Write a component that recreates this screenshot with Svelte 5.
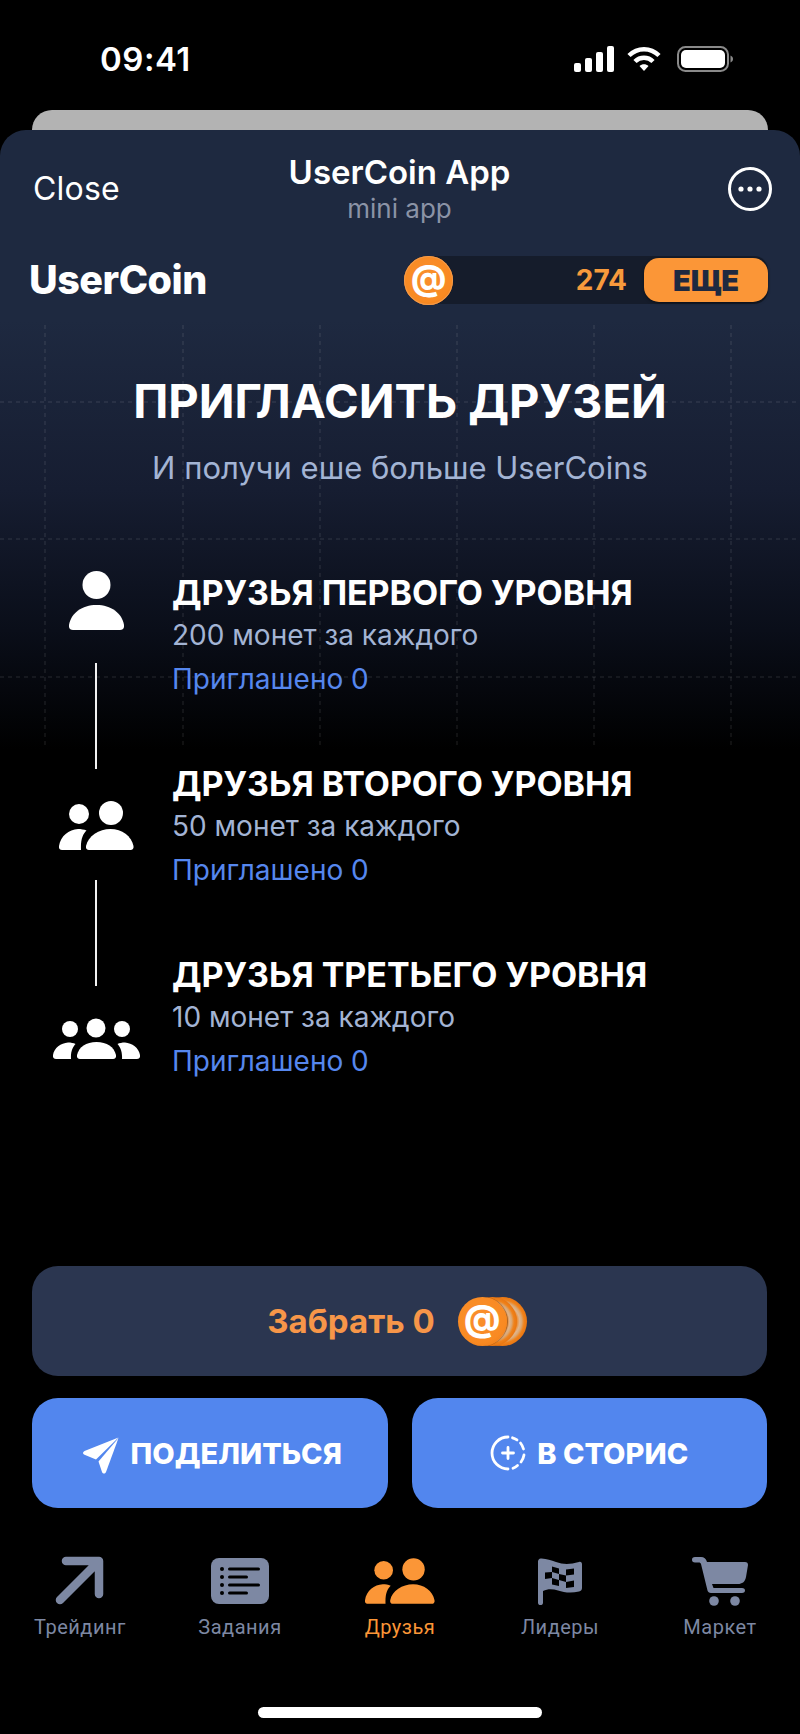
<script lang="ts">
  const levels = [
    { title: "ДРУЗЬЯ ПЕРВОГО УРОВНЯ", reward: "200 монет за каждого", invited: 0 },
    { title: "ДРУЗЬЯ ВТОРОГО УРОВНЯ", reward: "50 монет за каждого", invited: 0 },
    { title: "ДРУЗЬЯ ТРЕТЬЕГО УРОВНЯ", reward: "10 монет за каждого", invited: 0 },
  ];

  const tabs = [
    { key: "trade", label: "Трейдинг" },
    { key: "tasks", label: "Задания" },
    { key: "friends", label: "Друзья" },
    { key: "leaders", label: "Лидеры" },
    { key: "market", label: "Маркет" },
  ];
  const activeTab = "friends";

  // grid behind the hero, one line every 137px
  const gridX = [45, 183, 320, 457, 594, 731];
  const gridY = [402, 539, 677];
</script>

{#snippet coin(size: string)}
  <span class="coin {size}"><span class="at">@</span></span>
{/snippet}

{#snippet twoPeople()}
  <circle cx="20" cy="13" r="10" />
  <circle cx="52" cy="12" r="12" />
  <path d="M0 45C1.500 35 10 28.500 19 28C22 28 25 28.500 27.500 29.500C24 33 21.500 38 22 49H3C1 49-.5 47.500 0 45Z" />
  <path d="M27 45C29 35 40 28 51.500 28C63 28 72.500 35 74.500 45C75 47.500 73.500 49 71.500 49H30C28 49 26.500 47.500 27 45Z" />
{/snippet}

<div class="phone">
  <div class="status">
    <span class="time">09:41</span>
    <div class="status-icons">
      <svg width="40" height="26" viewBox="0 0 40 26" fill="#fff">
        <rect x="0" y="17" width="7" height="9" rx="2" />
        <rect x="11" y="12" width="7" height="14" rx="2" />
        <rect x="22" y="6" width="7" height="20" rx="2" />
        <rect x="33" y="0" width="7" height="26" rx="2" />
      </svg>
      <svg class="wifi" width="34" height="26" viewBox="0 0 34 26" fill="none" stroke="#fff" stroke-width="4.500">
        <path d="M2 9.500C10.500 1 23.500 1 32 9.500" />
        <path d="M8 15.500C13 10.500 21 10.500 26 15.500" />
        <path d="M12.500 20L17 25L21.500 20C19 17.500 15 17.500 12.500 20Z" fill="#fff" stroke="none" />
      </svg>
      <svg width="56" height="26" viewBox="0 0 56 26">
        <rect x="1" y="1" width="50" height="24" rx="7.500" fill="none" stroke="#8a8a8a" stroke-width="2" />
        <rect x="4" y="4" width="44" height="18" rx="5" fill="#fff" />
        <path d="M53.500 9.500c1.800.7 2.500 2 2.500 3.500s-.7 2.800-2.500 3.500z" fill="#8a8a8a" />
      </svg>
    </div>
  </div>

  <div class="peek"></div>

  <section class="sheet">
    <svg class="grid" width="800" height="640" viewBox="0 130 800 640">
      <g stroke="#fff" stroke-opacity="0.09" stroke-width="1.500" stroke-dasharray="4 4">
        {#each gridX as x}
          <line x1={x} y1="325" x2={x} y2="745" />
        {/each}
        {#each gridY as y}
          <line x1="0" y1={y} x2="800" y2={y} />
        {/each}
      </g>
    </svg>

    <header class="nav">
      <span class="close">Close</span>
      <div class="nav-title">
        <strong>UserCoin App</strong>
        <span>mini app</span>
      </div>
      <svg class="more" width="44" height="44" viewBox="0 0 44 44" fill="#fff">
        <circle cx="22" cy="22" r="20.500" fill="none" stroke="#fff" stroke-width="3" />
        <circle cx="13" cy="22" r="2.600" />
        <circle cx="22" cy="22" r="2.600" />
        <circle cx="31" cy="22" r="2.600" />
      </svg>
    </header>

    <div class="brand-row">
      <span class="logo">UserCoin</span>
      <div class="balance">
        {@render coin("coin-lg")}
        <span class="amount">274</span>
        <span class="more-btn">ЕЩЕ</span>
      </div>
    </div>

    <div class="hero">
      <h1>ПРИГЛАСИТЬ ДРУЗЕЙ</h1>
      <p>И получи еше больше UserCoins</p>
    </div>

    <div class="levels">
      <div class="rail">
        <svg class="person" width="55" height="60" viewBox="0 0 55 60" fill="#fff">
          <circle cx="27.500" cy="14" r="14" />
          <path d="M0 54C2 42 13 34 27.500 34C42 34 53 42 55 54C55.500 57 54 59 51 59H4C1 59-.5 57 0 54Z" />
        </svg>
        <span class="line"></span>
        <svg class="people" width="75" height="49" viewBox="0 0 75 49" fill="#fff">
          {@render twoPeople()}
        </svg>
        <span class="line"></span>
        <svg class="crowd" width="87" height="41" viewBox="0 0 87 41" fill="#fff">
          <circle cx="43" cy="10" r="9.500" />
          <circle cx="17" cy="11" r="8" />
          <circle cx="69" cy="11" r="8" />
          <path d="M24 37C26 29 33 24 43.500 24C54 24 61 29 63 37C63.500 39.500 62 41 60 41H27C25 41 23.500 39.500 24 37Z" />
          <path d="M0 37C1 30 8 25 15 24.500C18 24.500 20.500 25 22.500 26C20 29 17.500 33 18 41H3C1 41-.5 39.500 0 37Z" />
          <path d="M87 37C86 30 79 25 72 24.500C69 24.500 66.500 25 64.500 26C67 29 69.500 33 69 41H84C86 41 87.500 39.500 87 37Z" />
        </svg>
      </div>
      <div class="level-list">
        {#each levels as level}
          <div class="level">
            <h2>{level.title}</h2>
            <p class="reward">{level.reward}</p>
            <p class="invited">Приглашено {level.invited}</p>
          </div>
        {/each}
      </div>
    </div>

    <div class="actions">
      <button class="claim">
        <span>Забрать 0</span>
        <span class="stack">
          <span class="stack-back"></span>
          <span class="stack-mid"></span>
          {@render coin("coin-md")}
        </span>
      </button>
      <div class="action-row">
        <button class="primary">
          <svg class="plane" width="38" height="38" viewBox="0 0 38 38" fill="#fff">
            <path d="M36.500 1.500L2.500 15C.5 16 .5 18 2.500 18.800L14 23.500Z" />
            <path d="M36.500 2L16.500 25.500L20 36C21 38 23 38 24 36Z" />
          </svg>
          ПОДЕЛИТЬСЯ
        </button>
        <button class="primary">
          <svg width="36" height="36" viewBox="0 0 36 36" fill="none" stroke="#fff" stroke-width="2.800" stroke-linecap="round">
            <path d="M18 2A16 16 0 0 0 18 34" />
            <path d="M22.500 2.800A16 16 0 0 1 27 4.900" />
            <path d="M30.500 8A16 16 0 0 1 33.500 14" />
            <path d="M34 20A16 16 0 0 1 31 27" />
            <path d="M27.500 30.500A16 16 0 0 1 23 33.200" />
            <path d="M18 12.500V23.500M12.500 18H23.500" />
          </svg>
          В СТОРИС
        </button>
      </div>
    </div>

    <nav class="tabs">
      {#each tabs as tab}
        <div class="tab" class:active={tab.key === activeTab}>
          <div class="tab-icon">
            {#if tab.key === "trade"}
              <svg width="50" height="50" viewBox="0 0 50 50" fill="none" stroke="currentColor" stroke-width="8.500" stroke-linecap="round" stroke-linejoin="round">
                <path d="M5 44L44 5M11 5H44V38" />
              </svg>
            {:else if tab.key === "tasks"}
              <svg width="58" height="46" viewBox="0 0 58 46">
                <rect width="58" height="46" rx="8" fill="currentColor" />
                <g fill="#000">
                  <circle cx="11" cy="11" r="2" />
                  <circle cx="11" cy="19" r="2" />
                  <circle cx="11" cy="27" r="2" />
                  <circle cx="11" cy="35" r="2" />
                  <rect x="17" y="9.500" width="32" height="3" rx="1.500" />
                  <rect x="17" y="17.500" width="20" height="3" rx="1.500" />
                  <rect x="17" y="25.500" width="32" height="3" rx="1.500" />
                  <rect x="17" y="33.500" width="20" height="3" rx="1.500" />
                </g>
              </svg>
            {:else if tab.key === "friends"}
              <svg width="70" height="46" viewBox="0 0 75 49" fill="currentColor">
                {@render twoPeople()}
              </svg>
            {:else if tab.key === "leaders"}
              <svg width="44" height="47" viewBox="0 0 44 47">
                <path fill="currentColor" d="M0 3.500C0 1.500 1.500 0 3.500 .5C9 1 13 2 18 4C25 6.500 32 6.500 41 4C43 3.500 44 4.500 44 6.500V30C44 32 43 33 41 33.500C33 35.500 26 34.500 20 32.500C15 31 10 30.500 5 33V44.500C5 46.500 4 47 2.500 47C1 47 0 46.500 0 44.500Z" />
                <g fill="#000">
                  <path d="M14 8.500L21 10.500V16L14 14Z" />
                  <path d="M28 11.500L36 10.500V16.500L28 17.500Z" />
                  <path d="M7 14.500L14 14V20L7 21Z" />
                  <path d="M21 16L28 17.500V24L21 22Z" />
                  <path d="M14 20L21 22V28L14 26.500Z" />
                  <path d="M28 24L36 22.500V29L28 30Z" />
                </g>
              </svg>
            {:else}
              <svg width="56" height="49" viewBox="0 0 56 49" fill="currentColor">
                <path d="M3 0H9C12 0 14 1.500 15 5H53C55 5 56 6 56 8L54 20C53 25 50 27 46 27H20L21.500 31H50C52 31 53 32 53 33.500C53 35 52 36 50 36H19C17 36 16 35 15.500 33.500L9 7C8.500 6 8 5.500 7 5.500H3C1 5.500 0 4.500 0 2.700C0 1 1 0 3 0Z" />
                <circle cx="22" cy="44" r="4.800" />
                <circle cx="43" cy="44" r="4.800" />
              </svg>
            {/if}
          </div>
          <span>{tab.label}</span>
        </div>
      {/each}
    </nav>

    <div class="home-bar"></div>
  </section>
</div>

<style>
  :global(body) {
    background: #000;
  }
  .phone {
    width: 800px;
    height: 1734px;
    overflow: hidden;
    display: flex;
    flex-direction: column;
    background: #000;
    color: #fff;
    font-family: Inter, "Noto Sans", sans-serif;
  }
  .status {
    height: 110px;
    flex: none;
    display: flex;
    justify-content: space-between;
    align-items: center;
    padding: 8px 67px 0 100px;
    box-sizing: border-box;
  }
  .time {
    font-size: 33px;
    font-weight: 600;
    letter-spacing: 0.5px;
  }
  .status-icons {
    display: flex;
    align-items: center;
    gap: 13px;
  }
  .wifi {
    margin-right: 3px;
  }
  .peek {
    flex: none;
    height: 40px;
    margin: 0 32px -20px;
    background: #b3b3b3;
    border-radius: 20px 20px 0 0;
  }
  .sheet {
    position: relative;
    flex: 1;
    display: flex;
    flex-direction: column;
    border-radius: 26px 26px 0 0;
    background: linear-gradient(#1e2940 0, #1e2940 190px, #161d31 360px, #0a0e19 500px, #000 620px);
  }
  .grid {
    position: absolute;
    top: 0;
    left: 0;
    pointer-events: none;
  }
  .nav {
    position: relative;
    height: 115px;
    flex: none;
    display: grid;
    grid-template-columns: 1fr auto 1fr;
    align-items: center;
    padding: 0 28px 0 33px;
    box-sizing: border-box;
  }
  .close {
    font-size: 32px;
    margin-top: 1px;
    letter-spacing: 0.2px;
  }
  .nav-title {
    display: flex;
    flex-direction: column;
    align-items: center;
    margin-left: -6px;
    line-height: 1;
  }
  .nav-title strong {
    font-size: 33px;
    font-weight: 600;
    margin-top: 2px;
  }
  .nav-title span {
    margin-top: 7px;
    font-size: 26px;
    color: #8b93a6;
  }
  .more {
    justify-self: end;
    margin-top: 3px;
  }
  .brand-row {
    position: relative;
    flex: none;
    height: 70px;
    display: flex;
    justify-content: space-between;
    align-items: center;
    padding: 0 32px 0 29px;
  }
  .logo {
    font-size: 39.5px;
    font-weight: 800;
    letter-spacing: -0.5px;
  }
  .balance {
    position: relative;
    width: 364px;
    height: 48px;
    display: flex;
    align-items: center;
    background: #151c2b;
    border-radius: 24px 14px 14px 24px;
  }
  .amount {
    margin-left: auto;
    margin-right: 17px;
    font-size: 28px;
    font-weight: 700;
    color: #f79a3c;
  }
  .more-btn {
    width: 124px;
    height: 44px;
    display: flex;
    align-items: center;
    justify-content: center;
    border-radius: 15px;
    background: #fb9637;
    color: #1e2940;
    font-size: 29px;
    font-weight: 900;
    box-shadow: 0 1px 3px rgba(0, 0, 0, 0.5);
  }
  .coin {
    position: relative;
    flex: none;
    display: flex;
    align-items: center;
    justify-content: center;
    border-radius: 50%;
    background: radial-gradient(circle at 45% 40%, #f98f2d 0, #f98a22 65%, #e87612 100%);
    color: #fff;
    font-weight: 800;
  }
  .coin-lg {
    width: 49px;
    height: 49px;
    font-size: 34px;
    box-shadow: inset 0 0 0 1px #f39a4a;
  }
  .coin-md {
    width: 49px;
    height: 49px;
    font-size: 35px;
    box-shadow: 1px 0 1px rgba(120, 60, 10, 0.6);
  }
  .at {
    line-height: 1;
    margin-top: -5px;
  }
  .hero {
    position: relative;
    flex: none;
    text-align: center;
    padding-top: 59px;
  }
  .hero h1 {
    margin: 0;
    font-size: 47px;
    line-height: 54px;
    font-weight: 700;
  }
  .hero p {
    margin: 22px 0 0;
    font-size: 31px;
    line-height: 36px;
    color: #a3b4d4;
  }
  .levels {
    position: relative;
    flex: none;
    display: flex;
    margin-top: 85px;
  }
  .rail {
    width: 128px;
    margin-left: 32px;
    display: flex;
    flex-direction: column;
    align-items: center;
  }
  .person {
    flex: none;
  }
  .people {
    flex: none;
    margin: 0 0 -2px 1px;
  }
  .crowd {
    flex: none;
  }
  .line {
    flex: none;
    width: 2px;
    height: 106px;
    margin: 32px 0;
    background: #f2f2f2;
  }
  .level-list {
    margin-left: 12px;
    display: flex;
    flex-direction: column;
    gap: 59px;
  }
  .level h2 {
    margin: 0;
    font-size: 34px;
    line-height: 44px;
    font-weight: 700;
    white-space: nowrap;
    letter-spacing: -0.05px;
  }
  .level p {
    margin: 0;
    font-size: 28px;
  }
  .reward {
    line-height: 41px;
    color: #a3b4d4;
  }
  .invited {
    line-height: 47px;
    color: #5687ee;
  }
  .actions {
    position: absolute;
    left: 32px;
    right: 33px;
    top: 1136px;
    display: flex;
    flex-direction: column;
    gap: 22px;
  }
  button {
    border: 0;
    font-family: inherit;
    color: inherit;
    height: 110px;
    border-radius: 26px;
    display: flex;
    align-items: center;
    justify-content: center;
  }
  .claim {
    background: #2b3650;
    color: #f79649;
    font-size: 33px;
    font-weight: 700;
    gap: 23px;
    padding-right: 11px;
  }
  .stack {
    position: relative;
    width: 69px;
    height: 49px;
  }
  .stack-back,
  .stack-mid {
    position: absolute;
    top: 0;
    width: 49px;
    height: 49px;
    border-radius: 50%;
    background: radial-gradient(circle closest-side, #ef8520 0, #ef8520 58%, #e0b48c 70%, #dba873 78%, #f0821a 88%, #e87612 100%);
  }
  .stack-back {
    left: 20px;
  }
  .stack-mid {
    left: 10px;
  }
  .action-row {
    display: grid;
    grid-template-columns: 1fr 1fr;
    gap: 24px;
  }
  .primary {
    background: #5286ee;
    font-size: 29px;
    font-weight: 800;
    gap: 11px;
    padding-left: 6px;
  }
  .primary:first-child {
    padding-left: 10px;
  }
  .plane {
    margin-top: 4px;
  }
  .tabs {
    position: absolute;
    left: 0;
    right: 0;
    top: 1426px;
    display: grid;
    grid-template-columns: repeat(5, 1fr);
    color: #7d88a3;
  }
  .tab {
    display: flex;
    flex-direction: column;
    align-items: center;
  }
  .tab.active {
    color: #fb9637;
  }
  .tab-icon {
    height: 50px;
    display: flex;
    align-items: center;
  }
  .tab span {
    margin-top: 6px;
    font-family: Roboto, sans-serif;
    font-size: 20px;
    line-height: 30px;
    letter-spacing: 0.5px;
  }
  .home-bar {
    position: absolute;
    left: 258px;
    bottom: 16px;
    width: 284px;
    height: 11px;
    border-radius: 6px;
    background: #fff;
  }
</style>
